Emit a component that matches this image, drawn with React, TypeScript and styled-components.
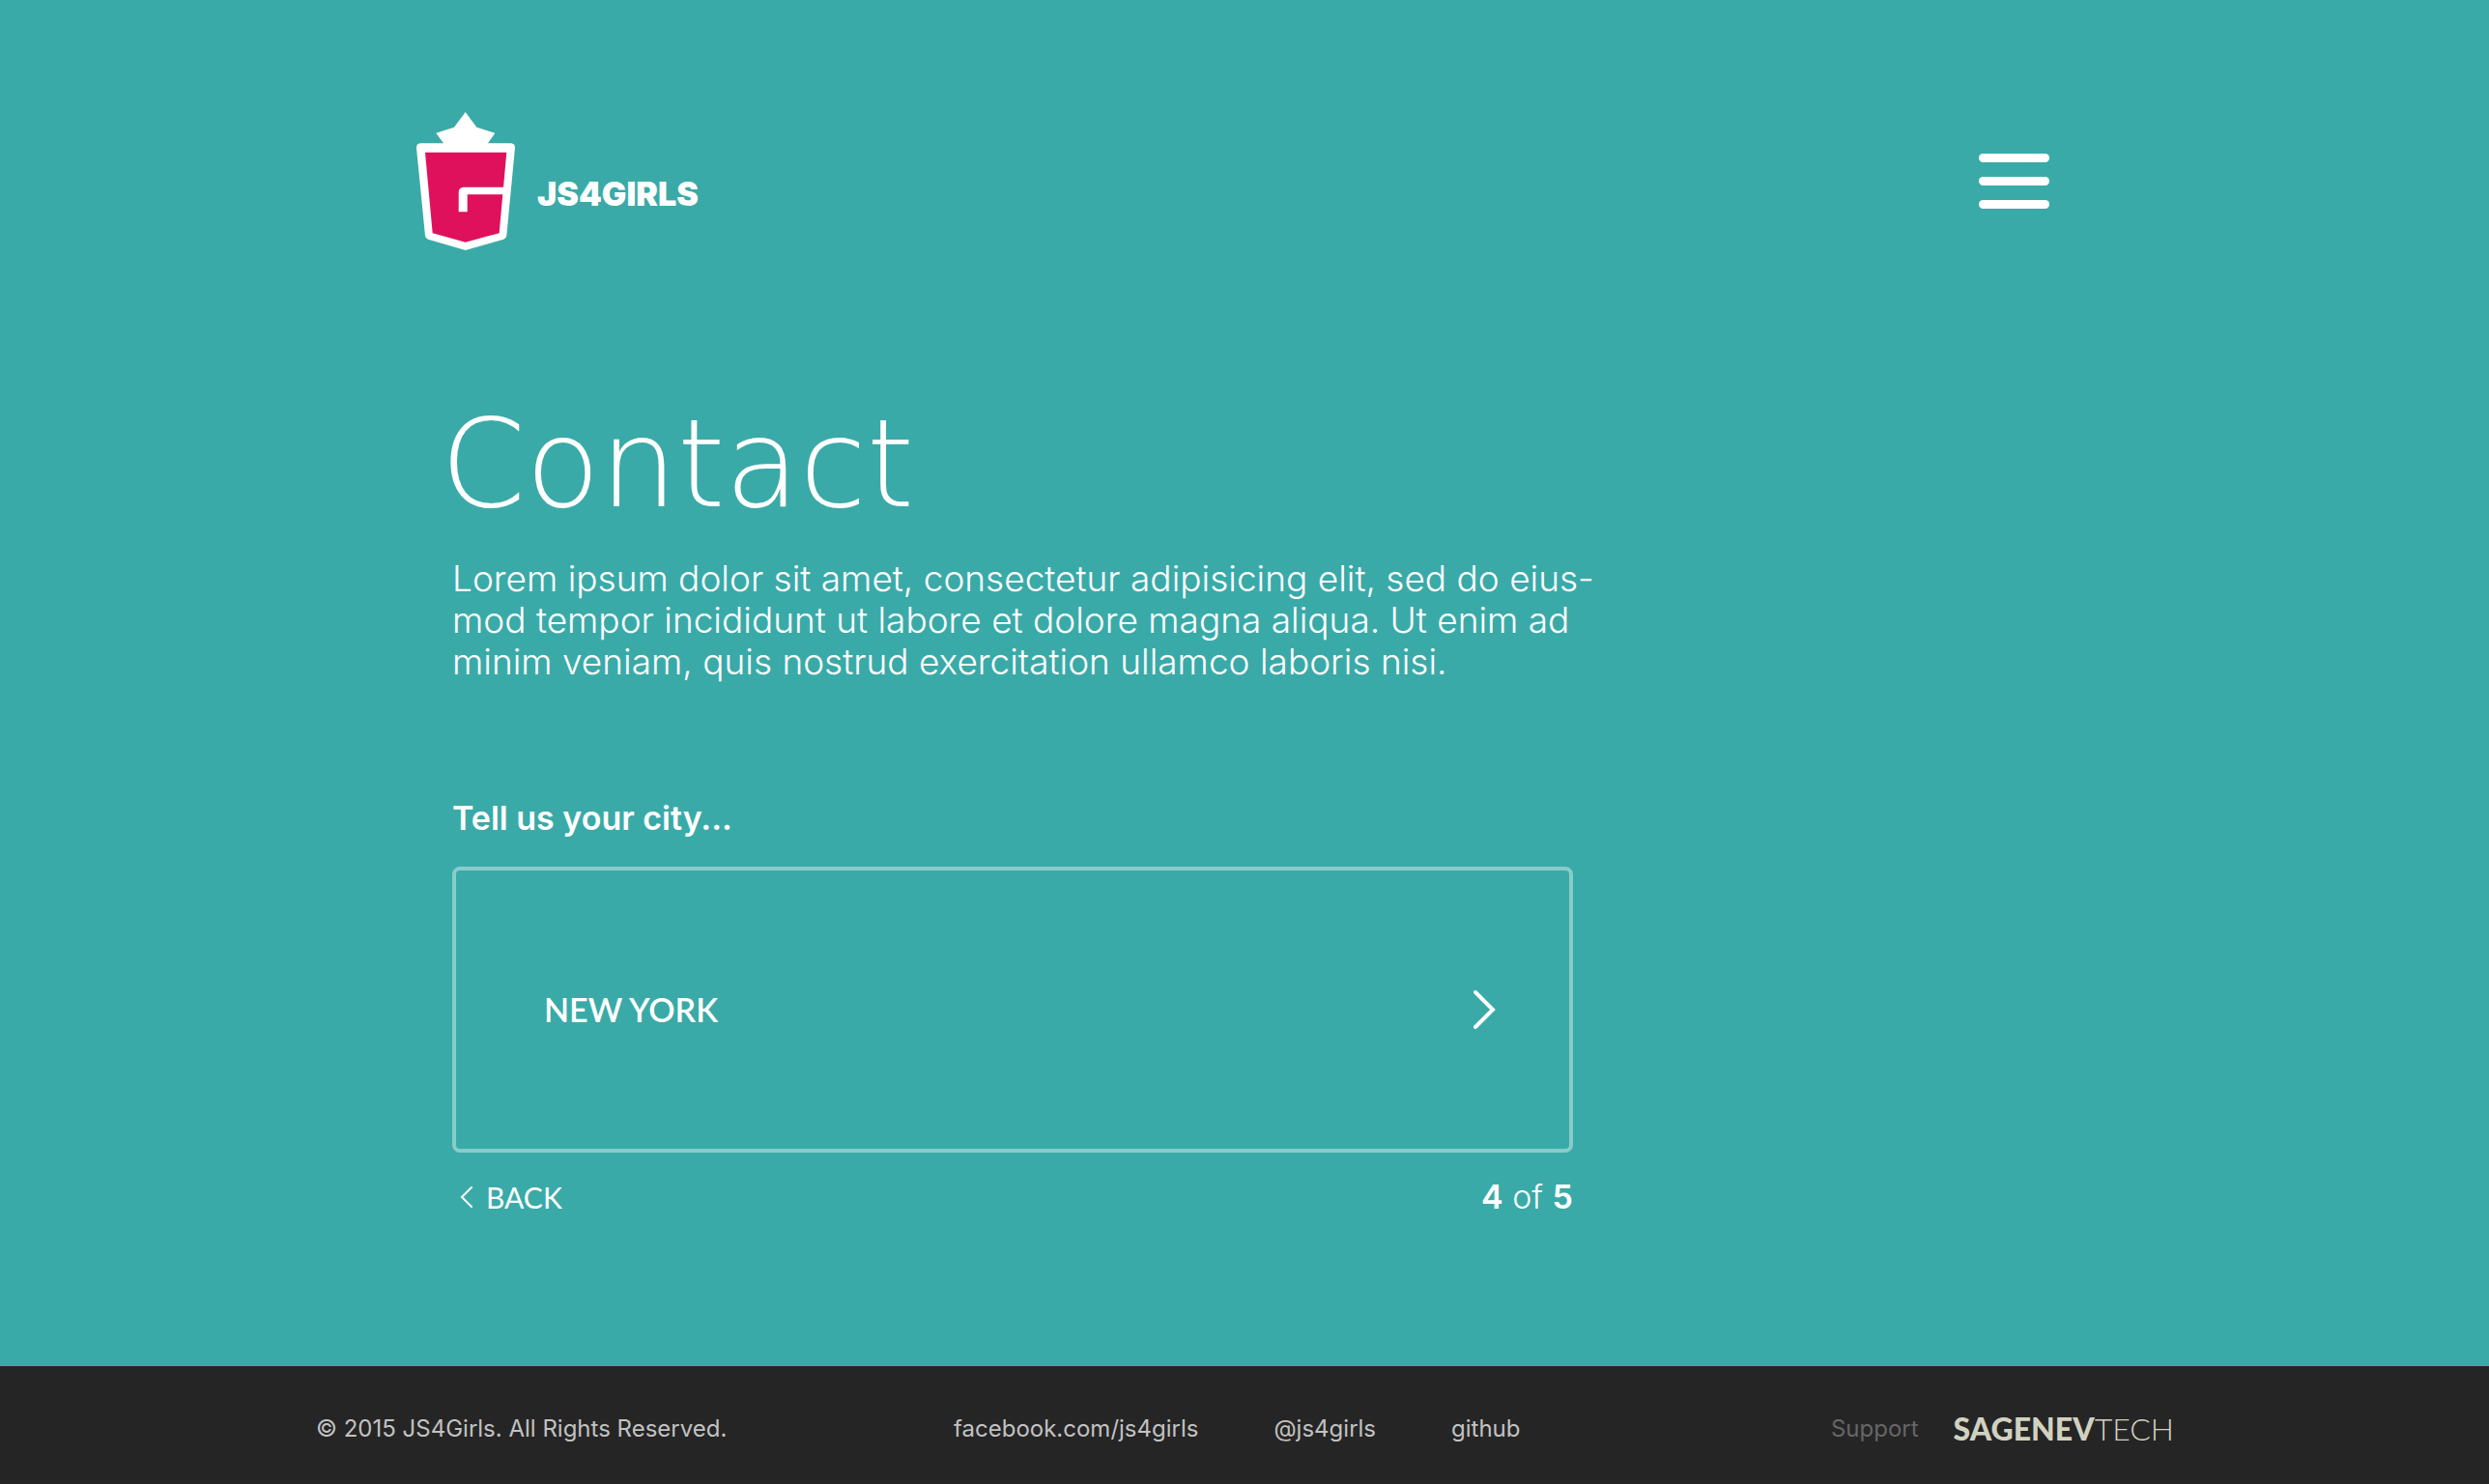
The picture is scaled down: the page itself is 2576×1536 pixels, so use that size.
import React, { useState } from "react";
import styled, { createGlobalStyle } from "styled-components";

const color = {
  teal: "#3aaaa8",
  pink: "#e0115c",
  outline: "#88cccb",
  footer: "#252525",
  footerText: "#c2c2c2",
  muted: "#666666",
  sponsor: "#d1d1c0",
};

const GlobalStyle = createGlobalStyle`
  *, *::before, *::after { box-sizing: border-box; }
  body { margin: 0; background: ${color.teal}; }
  h1, p { margin: 0; font-weight: inherit; }
  button, input { font: inherit; color: inherit; background: none; border: 0; padding: 0; margin: 0; }
  button { cursor: pointer; }
  a { color: inherit; text-decoration: none; }
`;

const Page = styled.div`
  min-height: 100vh;
  display: flex;
  flex-direction: column;
  background: ${color.teal};
  color: #fff;
  font-family: Inter, "Open Sans", sans-serif;
`;

const Header = styled.header`
  display: flex;
  align-items: center;
  justify-content: space-between;
  padding: 116px 455px 0 430px;
`;

const Brand = styled.a`
  display: flex;
  align-items: center;
  gap: 22px;
`;

const BrandName = styled.span`
  padding-top: 26px;
  font-size: 34px;
  line-height: 36px;
  font-weight: 900;
`;

const MenuButton = styled.button`
  display: flex;
  flex-direction: column;
  gap: 15px;
  width: 73px;
`;

const MenuBar = styled.span`
  height: 9px;
  border-radius: 5px;
  background: #fff;
`;

const Main = styled.main`
  flex: 1;
  padding: 154px 455px 100px 468px;
`;

const Title = styled.h1`
  margin-left: -12px;
  font-family: "DejaVu Sans", Inter, sans-serif;
  font-size: 126px;
  line-height: 136px;
  font-weight: 200;
`;

const Intro = styled.p`
  padding-top: 28px;
  font-size: 37px;
  line-height: 43px;
  font-weight: 300;
  white-space: nowrap;
`;

const Form = styled.form`
  max-width: 1160px;
  padding-top: 119px;
`;

const Label = styled.label`
  display: block;
  font-size: 34px;
  line-height: 44px;
  font-weight: 600;
`;

const Field = styled.div`
  display: flex;
  align-items: center;
  height: 296px;
  margin-top: 28px;
  padding: 0 76px 0 91px;
  border: 4px solid ${color.outline};
  border-radius: 8px;
`;

const CityInput = styled.input`
  flex: 1;
  min-width: 0;
  font-family: Lato, sans-serif;
  font-size: 34px;
  line-height: 44px;
  font-weight: 600;
  text-transform: uppercase;
  outline: none;
`;

const IconButton = styled.button`
  display: flex;
`;

const Steps = styled.div`
  display: flex;
  align-items: center;
  justify-content: space-between;
  padding: 24px 0 0 8px;
`;

const BackButton = styled.button`
  display: flex;
  align-items: center;
  gap: 14px;
  font-family: Lato, sans-serif;
  font-size: 30px;
  line-height: 44px;
`;

const Counter = styled.p`
  font-size: 34px;
  line-height: 44px;
  font-weight: 300;
`;

const Footer = styled.footer`
  display: grid;
  grid-template-columns: 660px 1fr auto;
  align-items: center;
  height: 122px;
  padding: 8px 326px 0 327px;
  background: ${color.footer};
  color: ${color.footerText};
  font-size: 24px;
  line-height: 32px;
  font-weight: 400;
`;

const Links = styled.nav`
  display: flex;
  gap: 78px;
`;

const Support = styled.div`
  display: flex;
  align-items: center;
  gap: 36px;
  color: ${color.muted};
`;

const Sponsor = styled.a`
  color: ${color.sponsor};
  font-family: Lato, sans-serif;
  font-size: 32px;
  font-weight: 300;
`;

const Heavy = styled.b<{ $weight: number }>`
  font-weight: ${(p) => p.$weight};
`;

const Logo = () => (
  <svg width="104" height="143" viewBox="0 0 104 143" aria-hidden="true">
    <path
      fill="#fff"
      d="M51.7 0 63.3 15.7 82.3 21.7 75 32.3H99q4 .3 4 4.7L94.3 128q-.3 2.8-3 3.7L51.7 143 13 131.7q-2.700-.9-3-3.700L1 37q0-4.400 4-4.700H29L21.300 21.700 40 15.700Z"
    />
    <path
      fill={color.pink}
      d="M10 41.700H94.300L91 77.700H50q-5.300.2-5.300 5.300V103.300H53.700V85.300H90.300L86.700 125.300 51.700 134.700 17.700 125.300Z"
    />
  </svg>
);

const Chevron = ({ left, size, stroke }: { left?: boolean; size: number; stroke: number }) => (
  <svg
    width={size / 2 + stroke / 2 + 1}
    height={size}
    fill="none"
    stroke="#fff"
    strokeWidth={stroke}
    strokeLinecap="round"
    aria-hidden="true"
  >
    {left ? (
      <path d={`M${size / 2 + 1} 1L2 ${size / 2}L${size / 2 + 1} ${size - 1}`} />
    ) : (
      <path d={`M2 2L${size / 2} ${size / 2}L2 ${size - 2}`} />
    )}
  </svg>
);

export default function App() {
  const [city, setCity] = useState("NEW YORK");

  return (
    <Page>
      <GlobalStyle />
      <Header>
        <Brand href="#">
          <Logo />
          <BrandName>JS4GIRLS</BrandName>
        </Brand>
        <MenuButton type="button" aria-label="Menu">
          <MenuBar />
          <MenuBar />
          <MenuBar />
        </MenuButton>
      </Header>

      <Main>
        <Title>Contact</Title>
        <Intro>
          Lorem ipsum dolor sit amet, consectetur adipisicing elit, sed do eius-
          <br />
          mod tempor incididunt ut labore et dolore magna aliqua. Ut enim ad
          <br />
          minim veniam, quis nostrud exercitation ullamco laboris nisi.
        </Intro>
        <Form onSubmit={(e) => e.preventDefault()}>
          <Label htmlFor="city">Tell us your city...</Label>
          <Field>
            <CityInput id="city" value={city} onChange={(e) => setCity(e.target.value)} />
            <IconButton type="submit" aria-label="Next">
              <Chevron size={40} stroke={4} />
            </IconButton>
          </Field>
          <Steps>
            <BackButton type="button">
              <Chevron left size={22} stroke={2} />
              BACK
            </BackButton>
            <Counter>
              <Heavy $weight={600}>4</Heavy> of <Heavy $weight={600}>5</Heavy>
            </Counter>
          </Steps>
        </Form>
      </Main>

      <Footer>
        <p>© 2015 JS4Girls. All Rights Reserved.</p>
        <Links>
          <a href="#facebook">facebook.com/js4girls</a>
          <a href="#twitter">@js4girls</a>
          <a href="#github">github</a>
        </Links>
        <Support>
          <span>Support</span>
          <Sponsor href="#sponsor">
            <Heavy $weight={900}>SAGENEV</Heavy>TECH
          </Sponsor>
        </Support>
      </Footer>
    </Page>
  );
}
